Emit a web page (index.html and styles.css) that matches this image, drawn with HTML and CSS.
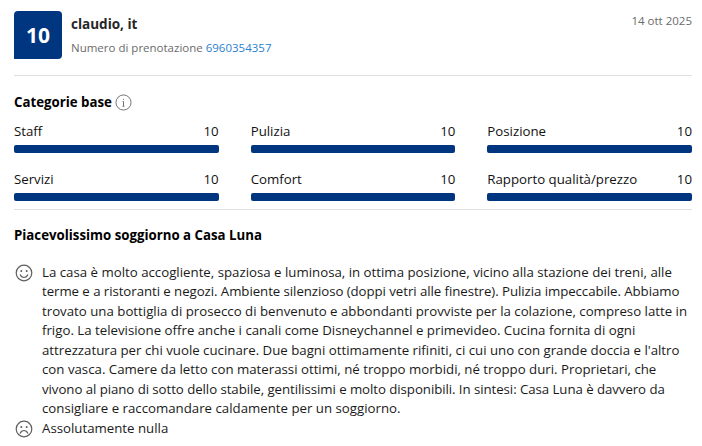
FILE: index.html
```html
<!DOCTYPE html>
<html lang="it">
<head>
    <meta charset="UTF-8">
    <meta name="viewport" content="width=device-width, initial-scale=1.0">
    <title>Recensione</title>
    <link rel="stylesheet" href="styles.css">
</head>
<body>
    <div class="review">
        <div class="header">
            <div class="score">10</div>
            <div class="guest">
                <div class="name">claudio, it</div>
                <div class="booking">Numero di prenotazione <a href="#">6960354357</a></div>
            </div>
            <div class="date">14 ott 2025</div>
        </div>

        <div class="categories">
            <h2>Categorie base
                <svg class="info" width="17" height="17" viewBox="0 0 18 18" fill="none" stroke="#6b6b6b">
                    <circle cx="9" cy="9" r="8"/>
                    <path d="M9 8v5M8 8h1M8 13h2"/>
                    <circle cx="9" cy="5.5" r="0.6" fill="#6b6b6b" stroke="none"/>
                </svg>
            </h2>
            <div class="grid">
                <div class="cat"><div class="cat-row"><span>Staff</span><span>10</span></div><div class="bar"></div></div>
                <div class="cat"><div class="cat-row"><span>Pulizia</span><span>10</span></div><div class="bar"></div></div>
                <div class="cat"><div class="cat-row"><span>Posizione</span><span>10</span></div><div class="bar"></div></div>
                <div class="cat"><div class="cat-row"><span>Servizi</span><span>10</span></div><div class="bar"></div></div>
                <div class="cat"><div class="cat-row"><span>Comfort</span><span>10</span></div><div class="bar"></div></div>
                <div class="cat"><div class="cat-row"><span>Rapporto qualità/prezzo</span><span>10</span></div><div class="bar"></div></div>
            </div>
        </div>

        <div class="body">
            <h3>Piacevolissimo soggiorno a Casa Luna</h3>
            <div class="comment first">
                <svg class="face" width="18" height="18" viewBox="0 0 18 18" fill="none" stroke="#5f5f5f" stroke-width="1.2">
                    <circle cx="9" cy="9" r="7.8"/>
                    <path d="M5 10.5c1 2 2.4 3 4 3s3-1 4-3"/>
                    <circle cx="6.3" cy="7" r="1" fill="#5f5f5f" stroke="none"/>
                    <circle cx="11.7" cy="7" r="1" fill="#5f5f5f" stroke="none"/>
                </svg>
                <p>La casa è molto accogliente, spaziosa e luminosa, in ottima posizione, vicino alla stazione dei treni, alle<br>
                <span class="tight">terme e a ristoranti e negozi. Ambiente silenzioso (doppi vetri alle finestre). Pulizia impeccabile. Abbiamo</span><br>
                trovato una bottiglia di prosecco di benvenuto e abbondanti provviste per la colazione, compreso latte in<br>
                frigo. La televisione offre anche i canali come Disneychannel e primevideo. Cucina fornita di ogni<br>
                attrezzatura per chi vuole cucinare. Due bagni ottimamente rifiniti, ci cui uno con grande doccia e l'altro<br>
                con vasca. Camere da letto con materassi ottimi, né troppo morbidi, né troppo duri. Proprietari, che<br>
                <span class="tight">vivono al piano di sotto dello stabile, gentilissimi e molto disponibili. In sintesi: Casa Luna è davvero da</span><br>
                consigliare e raccomandare caldamente per un soggiorno.</p>
            </div>
            <div class="comment">
                <svg class="face" width="18" height="18" viewBox="0 0 18 18" fill="none" stroke="#5f5f5f" stroke-width="1.2">
                    <circle cx="9" cy="9" r="7.8"/>
                    <path d="M5 13.5c1-2 2.4-3 4-3s3 1 4 3"/>
                    <circle cx="6.3" cy="7" r="1" fill="#5f5f5f" stroke="none"/>
                    <circle cx="11.7" cy="7" r="1" fill="#5f5f5f" stroke="none"/>
                </svg>
                <p>Assolutamente nulla</p>
            </div>
        </div>
    </div>
</body>
</html>
```

FILE: styles.css
```css
* {
    box-sizing: border-box;
    margin: 0;
    padding: 0;
}

body {
    font-family: 'Open Sans', 'Noto Sans', sans-serif;
    font-size: 13.25px;
    line-height: 19.5px;
    color: #1a1a1a;
    background: white;
    overflow: hidden;
}

.review {
    padding: 11px 10px 0 14px;
}

.header {
    display: flex;
    gap: 9px;
    padding-bottom: 16px;
    border-bottom: 1px solid #e0e0e0;
}

.score {
    width: 48px;
    height: 48px;
    padding-top: 2px;
    background: #003580;
    color: white;
    border-radius: 4px 4px 4px 0;
    font-size: 21px;
    font-weight: 700;
    display: flex;
    align-items: center;
    justify-content: center;
}

.guest {
    flex: 1;
}

.name {
    font-size: 13.5px;
    font-weight: 700;
    margin-top: 4px;
    color: #262626;
}

.booking {
    font-size: 11.5px;
    color: #6b6b6b;
    margin-top: 3px;
}

.booking a {
    color: #2a7fd0;
    text-decoration: none;
}

.date {
    font-size: 11.5px;
    color: #6b6b6b;
}

.categories {
    padding: 17px 0 8px;
    border-bottom: 1px solid #e0e0e0;
}

h2 {
    font-size: 13.25px;
    font-weight: 700;
    color: #000;
    display: flex;
    align-items: center;
    gap: 3px;
    margin-bottom: 10.5px;
}

.grid {
    display: grid;
    grid-template-columns: repeat(3, 1fr);
    gap: 18px 32px;
}

.cat-row {
    display: flex;
    justify-content: space-between;
    height: 22px;
    line-height: 16px;
    color: #111;
}

.bar {
    height: 8px;
    background: #003580;
    border-radius: 2px;
}

.body {
    padding-top: 16px;
}

h3 {
    font-size: 13.25px;
    font-weight: 700;
    color: #000;
    margin-bottom: 17px;
}

.comment {
    display: flex;
    gap: 9px;
    align-items: flex-start;
}

.face {
    flex: none;
    margin: 1px 0 0 1px;
}

.comment p {
    white-space: nowrap;
}

.tight {
    letter-spacing: -0.06px;
}
```
